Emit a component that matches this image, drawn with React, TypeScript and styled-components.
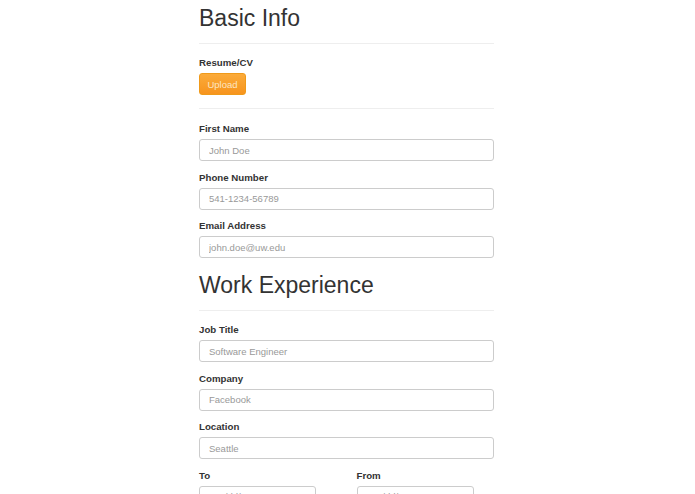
import React from "react";
import styled, { createGlobalStyle } from "styled-components";

const GlobalStyle = createGlobalStyle`
  html, body {
    margin: 0;
    padding: 0;
    background: #ffffff;
  }
  body {
    font-family: "Liberation Sans", Arial, Helvetica, sans-serif;
    color: #333333;
  }
  * {
    box-sizing: border-box;
  }
`;

const Page = styled.div`
  display: flex;
  justify-content: center;
  padding: 5px 2px 0 0;
`;

const Form = styled.form`
  width: 295px;
  display: flex;
  flex-direction: column;
`;

const Heading = styled.h2<{ $first?: boolean }>`
  margin: ${(p) => (p.$first ? "0" : "14px 0 0")};
  font-size: 23px;
  line-height: 26px;
  font-weight: 400;
  color: #333333;
`;

const Divider = styled.hr<{ $before?: number; $after?: number }>`
  margin: ${(p) => p.$before ?? 12}px 0 ${(p) => p.$after ?? 13}px;
  border: 0;
  border-top: 1px solid #eeeeee;
  height: 0;
  width: 100%;
`;

const Field = styled.div<{ $last?: boolean }>`
  display: flex;
  flex-direction: column;
  margin-bottom: ${(p) => (p.$last ? 0 : 10.5)}px;
`;

const Label = styled.label`
  font-size: 9.7px;
  line-height: 12px;
  font-weight: 700;
  color: #333333;
  margin-bottom: 4px;
`;

const Input = styled.input<{ $width?: number }>`
  width: ${(p) => (p.$width ? `${p.$width}px` : "100%")};
  height: 22px;
  padding: 0 9px;
  border: 1px solid #cccccc;
  border-radius: 3px;
  font-family: inherit;
  font-size: 9.5px;
  color: #555555;
  background: #ffffff;
  outline: none;
  &::placeholder {
    color: #999999;
  }
`;

const UploadButton = styled.button`
  align-self: flex-start;
  width: 47px;
  height: 22px;
  padding: 0;
  border: 1px solid #f09a1a;
  border-radius: 3px;
  background: linear-gradient(to bottom, #fbab3a, #f7941d);
  color: #fde6c2;
  font-family: inherit;
  font-size: 9.5px;
  cursor: pointer;
`;

const Row = styled.div`
  display: grid;
  grid-template-columns: 1fr 1fr;
  column-gap: 20px;
`;

const basicFields = [
  { label: "First Name", placeholder: "John Doe" },
  { label: "Phone Number", placeholder: "541-1234-56789" },
  { label: "Email Address", placeholder: "john.doe@uw.edu" },
];

const workFields = [
  { label: "Job Title", placeholder: "Software Engineer" },
  { label: "Company", placeholder: "Facebook" },
  { label: "Location", placeholder: "Seattle" },
];

export default function App() {
  return (
    <>
      <GlobalStyle />
      <Page>
        <Form onSubmit={(e) => e.preventDefault()}>
          <Heading $first>Basic Info</Heading>
          <Divider />
          <Label>Resume/CV</Label>
          <UploadButton type="button">Upload</UploadButton>
          <Divider $before={13} $after={14} />
          {basicFields.map((f, i) => (
            <Field key={f.label} $last={i === basicFields.length - 1}>
              <Label>{f.label}</Label>
              <Input placeholder={f.placeholder} />
            </Field>
          ))}

          <Heading>Work Experience</Heading>
          <Divider />
          {workFields.map((f) => (
            <Field key={f.label}>
              <Label>{f.label}</Label>
              <Input placeholder={f.placeholder} />
            </Field>
          ))}
          <Row>
            <Field>
              <Label>To</Label>
              <Input $width={117} placeholder="mm/dd/yyyy" />
            </Field>
            <Field>
              <Label>From</Label>
              <Input $width={117} placeholder="mm/dd/yyyy" />
            </Field>
          </Row>
        </Form>
      </Page>
    </>
  );
}
